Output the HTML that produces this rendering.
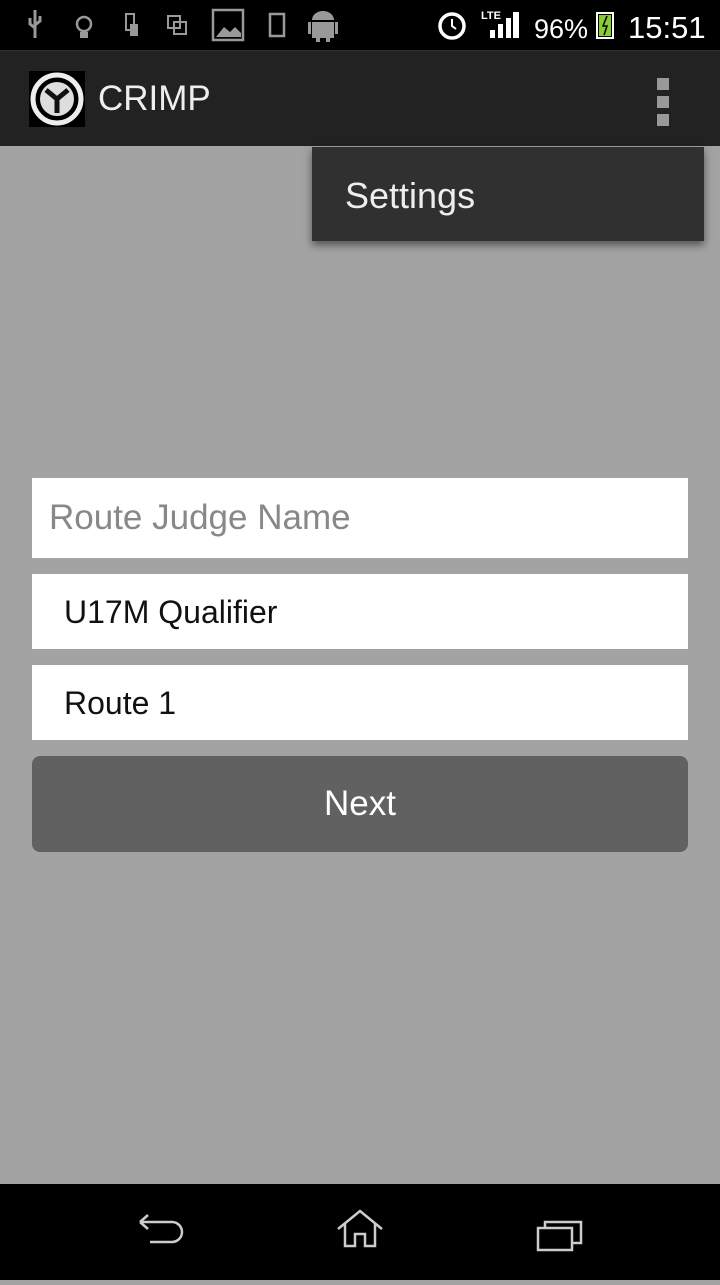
<!DOCTYPE html>
<html><head><style>
body{margin:0;width:720px;height:1280px;background:#a3a3a3;font-family:"Liberation Sans","DejaVu Sans",sans-serif;position:relative;overflow:hidden}
.sb{position:absolute;left:0;top:0;width:720px;height:50px;background:#000;color:#fff}
.ab{position:absolute;left:0;top:50px;width:720px;height:95px;background:#222;border-top:1px solid #333}
.nav{position:absolute;left:0;top:1184px;width:720px;height:96px;background:#000}
.field{position:absolute;left:32px;width:656px;background:#fff;font-size:32px}
</style></head><body>
<div class="sb">
<svg width="720" height="50" style="position:absolute;left:0;top:0">
<g fill="#999" stroke="#999">
<path d="M35 10v28M30 18v6l5 4M40 16v5l-5 4" stroke-width="3" fill="none"/>
<circle cx="84" cy="24" r="7" fill="none" stroke-width="2.5"/><rect x="80" y="32" width="8" height="6" stroke="none"/>
<rect x="126" y="14" width="8" height="16" fill="none" stroke-width="2"/><rect x="130" y="24" width="8" height="12" stroke="none"/>
<rect x="168" y="16" width="12" height="12" fill="none" stroke-width="2"/><rect x="174" y="22" width="12" height="12" fill="none" stroke-width="2"/>
<rect x="213" y="10" width="30" height="30" fill="none" stroke-width="2.5"/><path d="M216 37l8-10 6 5 5-5 6 6v4z" stroke="none"/>
<rect x="270" y="14" width="14" height="22" fill="none" stroke-width="2.5"/>
<rect x="312" y="22" width="22" height="16" stroke="none"/><path d="M312 20a11 9 0 0 1 22 0z" stroke="none"/><rect x="308" y="22" width="3" height="12" stroke="none"/><rect x="335" y="22" width="3" height="12" stroke="none"/><rect x="316" y="37" width="4" height="5" stroke="none"/><rect x="326" y="37" width="4" height="5" stroke="none"/>
</g>
<g fill="#fff" stroke="#fff">
<circle cx="452" cy="26" r="12" fill="none" stroke-width="3.5"/><path d="M452 19v7l4 3" fill="none" stroke-width="2"/>
<rect x="490" y="30" width="5" height="8" stroke="none"/><rect x="498" y="24" width="5" height="14" stroke="none"/><rect x="506" y="18" width="5" height="20" stroke="none"/><rect x="513" y="12" width="6" height="26" stroke="none"/>
<rect x="597" y="13" width="16" height="25" fill="none" stroke-width="2"/><rect x="599" y="15" width="12" height="21" fill="#8c3" stroke="none"/><path d="M607 16l-4 10h4l-3 9" stroke="#000" stroke-width="1.5" fill="none"/>
</g>
<text x="481" y="19" fill="#fff" font-size="11" font-weight="bold">LTE</text>
<text x="534" y="38" fill="#fff" font-size="27">96%</text>
<text x="628" y="38" fill="#fff" font-size="31">15:51</text>
</svg>
</div>
<div class="ab">
<div style="position:absolute;left:29px;top:20px;width:56px;height:56px;background:#000"><svg width="56" height="56"><circle cx="28" cy="28" r="24" fill="none" stroke="#eee" stroke-width="5"/><circle cx="28" cy="28" r="17" fill="#ddd"/><path d="M28 28l-11-9M28 28l11-9M28 28v14" stroke="#111" stroke-width="5"/></svg></div>
<div style="position:absolute;left:98px;top:28px;color:#eee;font-size:35px">CRIMP</div>
<div style="position:absolute;left:657px;top:27px;width:12px;height:12px;background:#999"></div>
<div style="position:absolute;left:657px;top:45px;width:12px;height:12px;background:#999"></div>
<div style="position:absolute;left:657px;top:63px;width:12px;height:12px;background:#999"></div>
</div>
<div style="position:absolute;left:312px;top:147px;width:392px;height:94px;background:#303030;box-shadow:0 4px 8px rgba(0,0,0,.5)"><div style="position:absolute;left:33px;top:28px;color:#eee;font-size:36px">Settings</div></div>
<div class="field" style="top:478px;height:80px;color:#888;font-size:35px"><div style="position:absolute;left:17px;top:20px">Route Judge Name</div></div>
<div class="field" style="top:574px;height:75px;color:#111"><div style="position:absolute;left:32px;top:20px">U17M Qualifier</div></div>
<div class="field" style="top:665px;height:75px;color:#111"><div style="position:absolute;left:32px;top:20px">Route 1</div></div>
<div style="position:absolute;left:32px;top:756px;width:656px;height:96px;background:#616161;border-radius:8px;color:#fff;font-size:35px;text-align:center;line-height:96px">Next</div>
<div class="nav"><svg width="720" height="96" fill="none" stroke="#ccc" stroke-width="2.5">
<path d="M140 38h32a10 10 0 0 1 0 20h-22M140 38l8-7M140 38l8 7"/>
<path d="M338 45l22-18 22 18M345 40v22h10v-12h10v12h10v-22"/>
<rect x="538" y="44" width="34" height="22"/><path d="M545 44v-6h36v21h-9"/>
</svg></div>
</body></html>
